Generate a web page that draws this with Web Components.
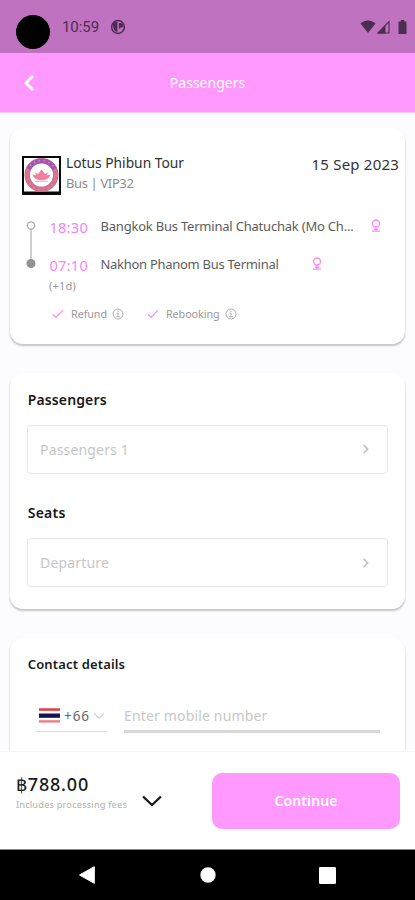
<!DOCTYPE html>
<html lang="en">
<head>
<meta charset="utf-8">
<title>Passengers</title>
<style>
html,body{margin:0;height:100%}
body{font-family:"Noto Sans","Open Sans",sans-serif;background:#fcfcff;overflow:hidden}
</style>
</head>
<body>
<booking-page></booking-page>
<script>
const define = (name, html, setup) => {
  const tpl = document.createElement('template');
  tpl.innerHTML = html;
  customElements.define(name, class extends HTMLElement {
    connectedCallback() {
      if (this.shadowRoot) return;
      this.attachShadow({mode: 'open'}).append(tpl.content.cloneNode(true));
      if (setup) setup(this, this.shadowRoot);
    }
  });
};

// One line of text whose letter spacing is adjusted so that it spans "w" pixels.
define('ui-text', `<style>
:host{display:block;white-space:nowrap;flex:none}
span{display:inline-block}
</style><span><slot></slot></span>`, (el, root) => {
  const span = root.querySelector('span');
  el.style.fontSize = el.getAttribute('size') + 'px';
  const w = +el.getAttribute('w');
  const n = el.textContent.length;
  const natural = span.getBoundingClientRect().width;
  span.style.letterSpacing = ((w - natural) / n) + 'px';
});

const icons = {
  back: ['0 0 12 18', '<path d="M10 2 3 9l7 7" fill="none" stroke="#fff" stroke-width="2.7"/>'],
  app: ['0 0 16 16', '<circle cx="8" cy="8" r="6.4" fill="none" stroke="#4d2c52" stroke-width="1.5"/><path d="M3 4.500C4 3 5.500 2.500 7.400 2.800V13C4 12.500 2.500 8 3 4.500zM8.800 4.200c3-.6 4.700.8 4.500 2.600-.3 1.500-1.600 2-3 1.900l-1.500 1.600z" fill="#4d2c52"/>'],
  wifi: ['0 0 16 14', '<path d="M.5 3.600C5-.4 11-.4 15.500 3.600L8 13z" fill="#4d2c52"/>'],
  signal: ['0 0 13 14', '<path d="M1 13 12 1.500V13z" fill="none" stroke="#4d2c52" stroke-width="1.100"/><path d="M.5 13.500 8.500 5v8.500z" fill="#4d2c52"/>'],
  battery: ['0 0 9 14', '<path d="M2.800 0h3.400v1.500h2.300V14H.5V1.500h2.300z" fill="#4d2c52"/>'],
  pin: ['0 0 10 13', '<g fill="none" stroke="#f98df9" stroke-width="1.400"><circle cx="5" cy="4.500" r="3.500"/><path d="M5 8v4M1 12.100h8M3 10.300h4"/></g>'],
  check: ['0 0 12 10', '<path d="m1 5.500 3 3L11 1.200" fill="none" stroke="#f58bf5" stroke-width="1.200"/>'],
  info: ['0 0 12 12', '<g fill="none" stroke="#adadad"><circle cx="6" cy="6" r="5"/><path d="M4.500 5.200H6v3.300M4.300 8.700h3.500M5.500 3.300h1.200"/></g>'],
  right: ['0 0 8 12', '<path d="m1.500 1.800 4.200 4.200-4.200 4.200" fill="none" stroke="#bdbdbd" stroke-width="1.500"/>'],
  small: ['0 0 12 8', '<path d="m1 1.500 5 4.700 5-4.700" fill="none" stroke="#cfcfcf" stroke-width="1.200"/>'],
  down: ['0 0 20 12', '<path d="m1 1.500 9 8.500 9-8.500" fill="none" stroke="#151515" stroke-width="2.200"/>'],
  flag: ['0 0 21 15', '<path fill="#fff" d="M0 0h21v15H0z"/><path fill="#e33a40" d="M0 .3h21v2.500H0z"/><path fill="#15134f" d="M0 5.500h21v4.300H0z"/><path fill="#f07d84" d="M0 12.200h21v2.400H0z"/>'],
  line: ['0 0 12 50', '<path d="M6 9v32" stroke="#b5b5b5" stroke-width="1.300"/><circle cx="6" cy="5.500" r="3.700" fill="#fff" stroke="#a5a5a5" stroke-width="1.200"/><circle cx="6" cy="43.500" r="4.500" fill="#929292"/>'],
  logo: ['0 0 39 39', `<path fill="#fff" stroke="#080808" stroke-width="2" d="M1 1h37v37H1z"/><path d="M1 37h37" stroke="#080808" stroke-width="3"/>
<circle cx="19.500" cy="19" r="14.300" fill="none" stroke="#d0718f" stroke-width="5.500"/>
<path d="M6.500 13a14.300 14.300 0 0 1 26 0" fill="none" stroke="#a055b8" stroke-width="4.500"/>
<circle cx="19.500" cy="19" r="14.500" fill="none" stroke="#dc8d92" stroke-width="1.500" stroke-dasharray="1.500 3.500"/>
<path d="M10.500 18.500l3.500 1-1-3 3 1.500 3.500-4.500 3.500 4.500 3-1.500-1 3 3.500-1c-1 3.500-3.500 5.500-9 5.500s-8-2-9-5.500z" fill="#f0809e"/><path d="M13 25.300h13" stroke="#f5a5b9"/>`],
  navback: ['0 0 16 18', '<path d="M15.300.7v16.600L.5 9z" fill="#fff" stroke="#fff" stroke-linejoin="round"/>'],
  navhome: ['0 0 16 16', '<circle cx="8" cy="8" r="7.700" fill="#fff"/>'],
  navapps: ['0 0 17 17', '<rect width="17" height="17" rx="1.300" fill="#fff"/>'],
};
define('ui-icon', `<style>:host{display:block;flex:none}svg{display:block}</style><div></div>`, (el, root) => {
  const [box, body] = icons[el.getAttribute('name')];
  const [, , w, h] = box.split(' ');
  root.querySelector('div').innerHTML = `<svg width="${w}" height="${h}" viewBox="${box}">${body}</svg>`;
});

define('status-bar', `<style>
:host{display:flex;height:53px;box-sizing:border-box;background:#bf72bf;color:#4d2c52;padding:0 8px 0 16px;flex:none;font-family:Roboto,sans-serif}
.cam{width:34px;height:34px;border-radius:50%;background:#000;margin-top:15px}
.row{display:flex;align-items:center;height:24px;margin-top:15px}
</style><div class="cam"></div>
<div class="row" style="margin-left:12px;gap:11px"><ui-text size="15" w="37">10:59</ui-text><ui-icon name="app"></ui-icon></div>
<div class="row" style="margin-left:auto"><ui-icon name="wifi"></ui-icon><ui-icon name="signal" style="margin:0 8px 0 1px"></ui-icon><ui-icon name="battery"></ui-icon></div>`);

define('title-bar', `<style>
:host{display:grid;grid-template-columns:1fr auto 1fr;align-items:center;height:60px;box-sizing:border-box;background:#ff99ff;color:#fff;padding:0 23px;flex:none;border-bottom:1px solid #f3cdf3}
</style><ui-icon name="back"></ui-icon><ui-text size="14" w="76"><slot></slot></ui-text>`);

define('ui-card', `<style>
:host{display:block;background:#fff;border-radius:13px;box-shadow:0 2px 2px -.5px #c6c6ca,0 1px 1.500px #e4e4e8;box-sizing:border-box;flex:none}
</style><slot></slot>`);

define('trip-card', `<style>
.head{display:flex;padding:24px 6px 0 11.500px;height:64px;box-sizing:content-box}
.head ui-icon{margin:4px 5.500px 0 0}
.head ui-text{line-height:21px}
.date{margin:2px 0 0 auto;color:#333}
.trip{display:flex;padding-left:15px}
.trip>ui-icon{margin-top:4px}
.stops{display:flex;flex-direction:column;gap:18px;padding-left:12.500px}
.stop{display:flex;height:20px;line-height:20px}
.time{color:#f683f6;margin:1px 12.500px 0 0}.place{color:#5c5c5c}
.plus{padding:4px 0 0 39px;color:#999;line-height:16px}
.perks{display:flex;align-items:center;padding:12px 0 0 42px;line-height:15px;color:#999}
</style>
<ui-card style="height:215.500px">
<div class="head"><ui-icon name="logo"></ui-icon><div><ui-text size="13.800" w="118" style="color:#303030">Lotus Phibun Tour</ui-text><ui-text size="13" w="67.500" style="color:#8b8b8b">Bus | VIP32</ui-text></div><ui-text class="date" size="15" w="87.500">15 Sep 2023</ui-text></div>
<div class="trip"><ui-icon name="line"></ui-icon><div class="stops">
<div class="stop"><ui-text class="time" size="14.500" w="38.500">18:30</ui-text><ui-text class="place" size="13" w="253">Bangkok Bus Terminal Chatuchak (Mo Ch...</ui-text><ui-icon name="pin" style="margin:3px 0 0 17.500px"></ui-icon></div>
<div class="stop"><ui-text class="time" size="14.500" w="38.500">07:10</ui-text><ui-text class="place" size="13" w="178">Nakhon Phanom Bus Terminal</ui-text><ui-icon name="pin" style="margin:3px 0 0 33.500px"></ui-icon></div>
</div></div>
<div class="plus"><ui-text size="11" w="27">(+1d)</ui-text></div>
<div class="perks"><ui-icon name="check"></ui-icon><ui-text size="10.800" w="36" style="margin:0 5px 0 7px">Refund</ui-text><ui-icon name="info"></ui-icon><ui-icon name="check" style="margin-left:23px"></ui-icon><ui-text size="10.800" w="53.500" style="margin:0 5px 0 7px">Rebooking</ui-text><ui-icon name="info"></ui-icon></div>
</ui-card>`);

define('select-field', `<style>
:host{display:flex;align-items:center;justify-content:space-between;height:49px;box-sizing:border-box;border:1.500px solid #e6e6e6;border-radius:4px;padding:0 17px 0 12px;color:#c6c6c6}
</style><slot></slot><ui-icon name="right"></ui-icon>`);

define('passenger-card', `<style>
ui-card{height:236px;padding:17px 17px 0}
h2{margin:0 0 0 .7px;font-size:14px;line-height:20px;font-weight:600;color:#191919}
</style>
<ui-card>
<h2><ui-text size="14" w="79">Passengers</ui-text></h2>
<select-field style="margin:15px 0 29.500px"><ui-text size="14" w="89">Passengers 1</ui-text></select-field>
<h2><ui-text size="14" w="38">Seats</ui-text></h2>
<select-field style="margin-top:15px"><ui-text size="14" w="69">Departure</ui-text></select-field>
</ui-card>`);

define('contact-card', `<style>
ui-card{height:150px;padding:16.500px 25px 0 17px}
h2{margin:0 0 0 .7px;font-weight:600;color:#191919;line-height:20px}
.row{display:flex;gap:17px;padding:26.500px 0 0 9px}
.code{display:flex;align-items:center;width:71px;height:31px;border-bottom:1px solid #dcdcdc;box-sizing:border-box;padding-left:3px;color:#666}
.num{flex:1;height:32px;box-sizing:border-box;border-bottom:3px solid #d8d8d8;color:#c8c8c8;line-height:30px}
</style>
<ui-card><h2><ui-text size="13" w="97.500">Contact details</ui-text></h2>
<div class="row"><div class="code"><ui-icon name="flag"></ui-icon><ui-text size="13.500" w="26" style="margin:0 3px 0 4px">+66</ui-text><ui-icon name="small"></ui-icon></div>
<div class="num"><ui-text size="14" w="143.500">Enter mobile number</ui-text></div></div></ui-card>`);

define('pay-bar', `<style>
:host{display:flex;height:99px;box-sizing:border-box;background:#fff;padding:0 15px 0 16px;border-top:1px solid #f5f5f5;border-bottom:1px solid #8a8a8a}
.price{padding-top:21px;width:126px;color:#191919;line-height:22px;font-weight:500}
.fee{line-height:20px;color:#b0b0b0;font-weight:400}
button{margin:21px 0 0 auto;width:188px;height:56px;border:0;border-radius:10px;background:#ff99ff;color:#fff;font:600 14px/56px "Noto Sans",sans-serif;display:flex;justify-content:center;align-items:center;padding:0}
</style><div class="price"><ui-text size="18" w="73">฿788.00</ui-text><ui-text class="fee" size="9.300" w="111">Includes processing fees</ui-text></div><ui-icon name="down" style="margin-top:43px"></ui-icon><button><ui-text size="14" w="63">Continue</ui-text></button>`);

define('system-nav', `<style>
:host{display:flex;align-items:center;justify-content:space-between;height:50px;background:#000;padding:0 79px;box-sizing:border-box}
ui-icon[name=navhome]{margin-left:1px}
</style><ui-icon name="navback"></ui-icon><ui-icon name="navhome"></ui-icon><ui-icon name="navapps"></ui-icon>`);

define('booking-page', `<style>
:host{display:flex;flex-direction:column;width:415px;height:900px}
main{flex:1;min-height:0;overflow:hidden;display:flex;flex-direction:column;gap:29px;padding:15px 10px 0}
main>*{flex:none}
</style>
<status-bar></status-bar><title-bar>Passengers</title-bar>
<main><trip-card></trip-card><passenger-card></passenger-card><contact-card></contact-card></main>
<pay-bar></pay-bar><system-nav></system-nav>`);
</script>
</body>
</html>
